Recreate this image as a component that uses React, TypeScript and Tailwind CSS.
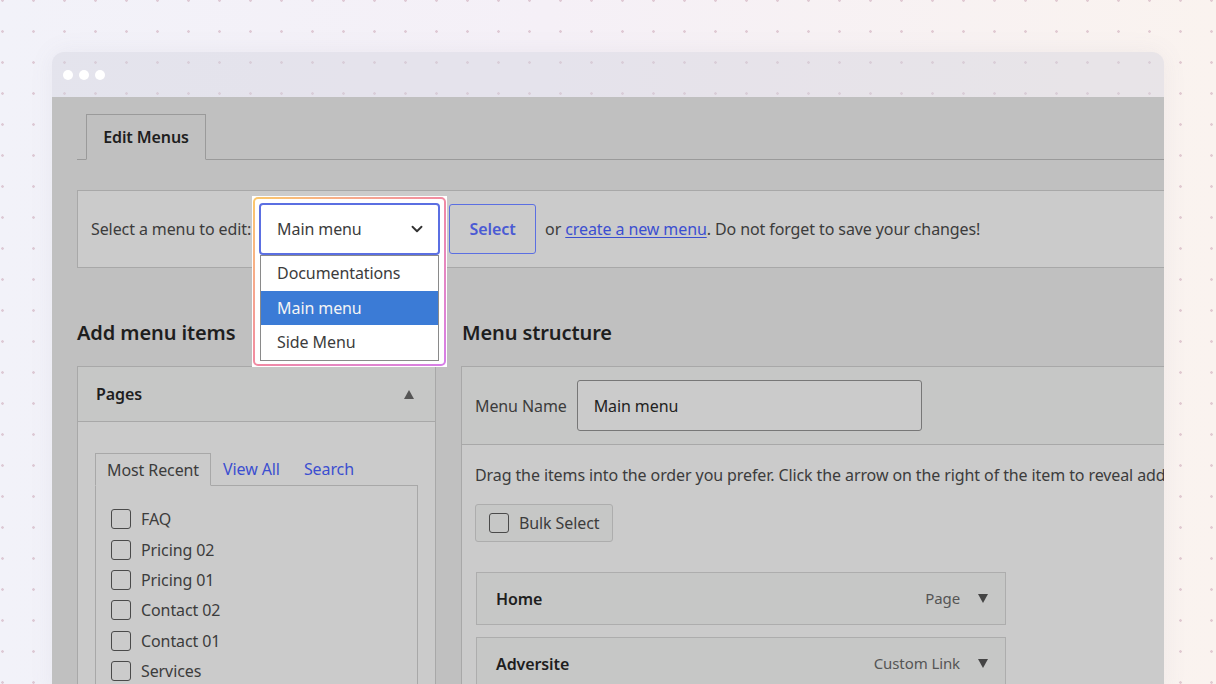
import { ChevronDown } from 'lucide-react'

const recentPages = ['FAQ', 'Pricing 02', 'Pricing 01', 'Contact 02', 'Contact 01', 'Services']

const menuOptions = ['Documentations', 'Main menu', 'Side Menu']

function Checkbox() {
  return <span className="block h-[20px] w-[20px] shrink-0 rounded-[3px] border-[1.5px] border-[#4a4a4a]" />
}

function MenuItem({ title, kind }: { title: string; kind: string }) {
  return (
    <div className="flex h-[53px] w-[530px] items-center justify-between border border-[#adadad] bg-[#c6c7c6] pl-[19px] pr-[17px]">
      <span className="text-[16px] font-semibold text-[#1e1e1e]">{title}</span>
      <div className="flex items-center gap-[18px]">
        <span className="text-[15px] text-[#555]">{kind}</span>
        <span className="h-0 w-0 border-x-[5px] border-t-[9px] border-x-transparent border-t-[#444]" />
      </div>
    </div>
  )
}

export default function App() {
  return (
    <div className="h-[684px] overflow-hidden bg-[radial-gradient(circle,rgba(205,170,185,0.55)_1px,transparent_1.6px),linear-gradient(90deg,#f2f2f9,#f5f0f7_45%,#faf3ef)] bg-[length:31px_31px,100%_100%] bg-[position:-13px_-15px,0_0] px-[52px] pt-[52px] font-['Noto_Sans',sans-serif] tracking-[-0.1px] text-[#3c3c3c]">
      <div className="overflow-hidden rounded-t-[12px] shadow-[0_0_24px_rgba(120,110,140,0.08)]">
        {/* window chrome */}
        <div className="flex h-[45px] items-center gap-[6px] bg-[rgba(210,210,222,0.45)] pl-[11px]">
          <span className="h-[10px] w-[10px] rounded-full bg-white" />
          <span className="h-[10px] w-[10px] rounded-full bg-white" />
          <span className="h-[10px] w-[10px] rounded-full bg-white" />
        </div>

        <div className="h-[600px] overflow-hidden bg-[#c0c0c0] pl-[25px] pt-[17px]">
          {/* tabs */}
          <div className="flex w-[1100px] border-b border-[#9a9a9a] pl-[9px]">
            <div className="-mb-px flex h-[46px] w-[120px] items-center justify-center border border-[#9a9a9a] border-b-[#c0c0c0] bg-[#c0c0c0] text-[16px] font-semibold text-[#1e1e1e]">
              Edit Menus
            </div>
          </div>

          {/* menu picker */}
          <div className="mt-[30px] flex h-[78px] w-[1100px] items-center border border-[#a8a8a8] bg-[#cbcbcb] pl-[13px] text-[16px]">
            <span>Select a menu to edit:</span>
            <div className="relative ml-[8px] h-[52px] w-[181px]">
              <div className="absolute left-[-7px] top-[-7px] h-[171px] w-[195px] bg-white p-[1px]">
                <div className="h-full rounded-[5px] bg-linear-to-br from-[#fbc86a] via-[#f18aa2] to-[#d67ee8] p-[2px]">
                  <div className="h-full rounded-[3px] bg-white" />
                </div>
              </div>
              <div className="relative flex h-[52px] items-center justify-between rounded-[4px] border-2 border-[#5b6fe2] bg-white pl-[16px] pr-[12px]">
                <span>Main menu</span>
                <ChevronDown size={18} strokeWidth={2.5} className="text-[#333]" />
              </div>
              <ul className="absolute left-[1px] right-[1px] top-full border border-[#8a8a8a] bg-white">
                {menuOptions.map((option) => (
                  <li
                    key={option}
                    className={
                      option === 'Main menu'
                        ? 'flex h-[34.5px] items-center bg-[#3b7bd6] pl-[16px] text-[#f4f4f4]'
                        : 'flex h-[34.5px] items-center pl-[16px]'
                    }
                  >
                    {option}
                  </li>
                ))}
              </ul>
            </div>
            <button className="ml-[9px] h-[50px] w-[87px] rounded-[3px] border-[1.5px] border-[#5b6fe2] font-semibold text-[#4a5ad4]">
              Select
            </button>
            <span className="ml-[9px]">
              or{' '}
              <a className="text-[#3b4fd0] underline underline-offset-2">create a new menu</a>
              . Do not forget to save your changes!
            </span>
          </div>

          <div className="mt-[51px] flex gap-[25px]">
            {/* add menu items */}
            <div className="w-[359px] shrink-0">
              <h2 className="h-[47px] text-[20px] font-semibold leading-[28px] text-[#1e1e1e]">Add menu items</h2>
              <div className="border border-[#a8a8a8] bg-[#cbcbcb]">
                <div className="flex h-[55px] items-center justify-between border-b border-[#a8a8a8] bg-[#c6c7c6] pl-[18px] pr-[21px]">
                  <span className="text-[16px] font-semibold text-[#1e1e1e]">Pages</span>
                  <span className="h-0 w-0 border-x-[5px] border-b-[9px] border-x-transparent border-b-[#555]" />
                </div>
                <div className="px-[17px] pt-[31px]">
                  <div className="flex items-end text-[16px]">
                    <div className="-mb-px flex h-[33px] items-center border border-[#a8a8a8] border-b-[#cbcbcb] bg-[#cbcbcb] px-[11px]">
                      Most Recent
                    </div>
                    <span className="ml-[12px] flex h-[32px] items-center text-[#3b4fd0]">View All</span>
                    <span className="ml-[24px] flex h-[32px] items-center text-[#3b4fd0]">Search</span>
                  </div>
                  <div className="h-[220px] border border-[#a8a8a8] pl-[15px] pt-[18px]">
                    {recentPages.map((page) => (
                      <label key={page} className="flex h-[30.4px] items-center gap-[10px] text-[16px]">
                        <Checkbox />
                        {page}
                      </label>
                    ))}
                  </div>
                </div>
              </div>
            </div>

            {/* menu structure */}
            <div className="w-[720px] shrink-0">
              <h2 className="h-[47px] pl-[1px] text-[20px] font-semibold leading-[28px] text-[#1e1e1e]">Menu structure</h2>
              <div className="h-[400px] border border-[#a8a8a8] bg-[#cbcbcb]">
                <div className="flex h-[78px] items-center border-b border-[#a8a8a8] bg-[#c6c7c6] pl-[13px]">
                  <span className="text-[16px]">Menu Name</span>
                  <div className="ml-[10px] flex h-[51px] w-[345px] items-center rounded-[3px] border border-[#777] bg-[#cbcbcb] pl-[16px] text-[16px] text-[#222]">
                    Main menu
                  </div>
                </div>
                <div className="px-[13px] pt-[18px]">
                  <p className="whitespace-nowrap text-[16px] leading-[24px]">
                    Drag the items into the order you prefer. Click the arrow on the right of the item to reveal additional configuration options.
                  </p>
                  <div className="mt-[17px] flex h-[38px] w-[138px] items-center gap-[10px] rounded-[3px] border border-[#adadad] bg-[#c6c7c6] pl-[13px] text-[16px]">
                    <Checkbox />
                    Bulk Select
                  </div>
                  <div className="ml-[1px] mt-[30px] flex flex-col gap-[12px]">
                    <MenuItem title="Home" kind="Page" />
                    <MenuItem title="Adversite" kind="Custom Link" />
                  </div>
                </div>
              </div>
            </div>
          </div>
        </div>
      </div>
    </div>
  )
}
